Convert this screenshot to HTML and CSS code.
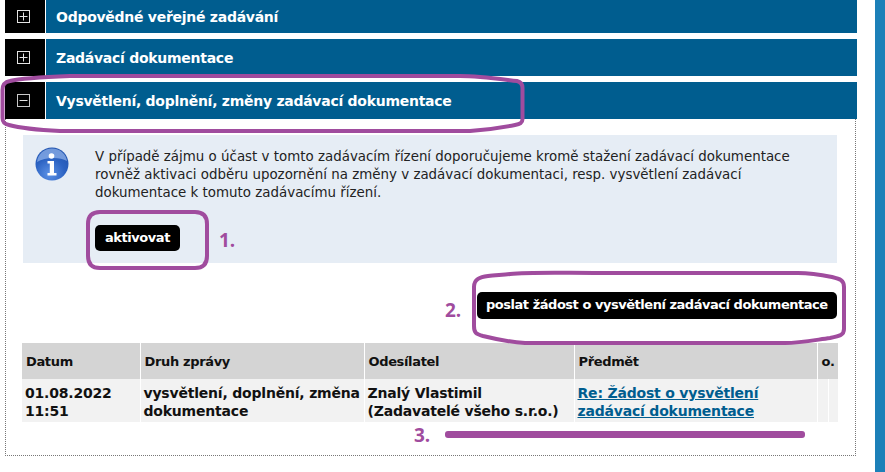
FILE: index.html
```html
<!DOCTYPE html>
<html lang="cs">
<head>
<meta charset="utf-8">
<title>Vysvětlení</title>
<link rel="stylesheet" href="styles.css">
</head>
<body>
<div class="page">
  <main class="content">
    <div class="bar bar-first"><span class="toggle"><svg width="13" height="13" viewBox="0 0 13 13"><rect x="0.5" y="0.5" width="12" height="12" fill="none" stroke="#e4e4e4"/><path d="M6.500 2.500v8M2.500 6.500h8" stroke="#e4e4e4"/></svg></span><h2 class="bar-title">Odpovědné veřejné zadávání</h2></div>
    <div class="bar"><span class="toggle"><svg width="13" height="13" viewBox="0 0 13 13"><rect x="0.5" y="0.5" width="12" height="12" fill="none" stroke="#e4e4e4"/><path d="M6.500 2.500v8M2.500 6.500h8" stroke="#e4e4e4"/></svg></span><h2 class="bar-title">Zadávací dokumentace</h2></div>
    <div class="bar"><span class="toggle"><svg width="13" height="13" viewBox="0 0 13 13"><rect x="0.5" y="0.5" width="12" height="12" fill="none" stroke="#c8c8c8"/><path d="M2.500 6.500h8" stroke="#e4e4e4"/></svg></span><h2 class="bar-title">Vysvětlení, doplnění, změny zadávací dokumentace</h2></div>
    <section class="panel">
      <div class="info">
        <svg class="info-icon" width="34" height="34" viewBox="0 0 34 34">
          <defs>
            <radialGradient id="g" cx="0.42" cy="0.8" r="0.85"><stop offset="0" stop-color="#5d92e6"/><stop offset="0.55" stop-color="#2b62c2"/><stop offset="1" stop-color="#2153ad"/></radialGradient>
          </defs>
          <circle cx="17" cy="17" r="16.500" fill="url(#g)"/>
          <path d="M2 15C3 7 9 1.500 17 1.500S31 7 32 14C25 10 10 10 2 15z" fill="#9dbdf0" opacity="0.65"/>
          <circle cx="16.500" cy="9" r="2.800" fill="#fff"/>
          <path d="M12.500 14h6.500v12h2.500v2.500h-9V26h2.300v-9.500h-2.300z" fill="#fff"/>
        </svg>
        <div class="info-body">
          <p class="info-text">V případě zájmu o účast v tomto zadávacím řízení doporučujeme kromě stažení zadávací dokumentace rovněž aktivaci odběru upozornění na změny v zadávací dokumentaci, resp. vysvětlení zadávací dokumentace k tomuto zadávacímu řízení.</p>
          <a class="btn" href="#">aktivovat</a>
        </div>
      </div>
      <div class="actions"><a class="btn btn-wide" href="#">poslat žádost o vysvětlení zadávací dokumentace</a></div>
      <table class="messages">
        <colgroup><col class="c1"><col class="c2"><col class="c3"><col class="c4"><col class="c5"><col class="c6"></colgroup>
        <thead>
          <tr><th>Datum</th><th>Druh zprávy</th><th>Odesílatel</th><th>Předmět</th><th colspan="2">o.</th></tr>
        </thead>
        <tbody>
          <tr><td>01.08.2022<br>11:51</td><td>vysvětlení, doplnění, změna dokumentace</td><td>Znalý Vlastimil<br>(Zadavatelé všeho s.r.o.)</td><td><a href="#">Re: Žádost o vysvětlení zadávací dokumentace</a></td><td></td><td></td></tr>
        </tbody>
      </table>
    </section>
  </main>
  <aside class="side"></aside>

  <svg class="marks" width="885" height="472" viewBox="0 0 885 472">
    <path d="M10 81C22 78 45 77 70 76H460C480 76 500 79 517 81C521 82 522.500 84 522.500 88V119C522.500 123 520 124 515 125C500 128 485 130 470 131H60C40 130 20 128 9 125C4 124 2.500 122 2.500 118V90C2.500 84 5 82 10 81z"/>
    <path d="M100 212H195C203 212 207 216 207 224V256C207 264 203 268 195 268H100C92 268 88 264 88 256V224C88 216 92 212 100 212z"/>
    <path d="M510 274C530 272 560 273 600 273H798C810 273 822 275 832 277C840 279 844 280 844 287V329C844 335 840 336 830 338C815 340 800 343 785 343H525C510 342 495 339 483 336C476 334 474 333 474 326V287C474 279 480 277 488 276C495 275 502 275 510 274z"/>
  </svg>
  <div class="ann-line"></div>
  <span class="ann-num n1">1.</span>
  <span class="ann-num n2">2.</span>
  <span class="ann-num n3">3.</span>
</div>
</body>
</html>
```
FILE: styles.css
```css
* { box-sizing: border-box; }
html, body { margin: 0; padding: 0; height: 100%; background: #fff; overflow: hidden; }
body { font-family: "DejaVu Sans", Verdana, sans-serif; color: #111; }

.page { position: relative; width: 885px; height: 472px; display: flex; overflow: hidden; }
.content { width: 852px; margin-left: 5px; flex: none; }
.side { width: 10px; margin-left: 18px; flex: none; background: #1c80b8; }

.bar { display: flex; height: 37px; margin-bottom: 6px; background: #005d8f; }
.bar-first { height: 33px; }
.toggle { width: 41px; flex: none; display: flex; align-items: center; justify-content: center; background: #000; border-right: 1px solid #fff; padding-right: 4px; }
.toggle svg { display: block; }
.bar-title { margin: 0 0 0 10px; align-self: center; font-size: 14px; font-weight: bold; color: #fff; letter-spacing: -0.27px; line-height: 16px; }

.panel { margin-top: -6px; width: 851px; height: 337px; border: 1px dotted #777; border-top: 0; padding: 16px 17px 0 17px; }
.info { display: flex; height: 128px; width: 814px; background: #e6edf5; padding: 12px 0 0 12px; }
.info-icon { flex: none; display: block; }
.info-body { margin-left: 26px; }
.info-text { margin: 1px 0 0; width: 702px; font-size: 13.4px; line-height: 18px; color: #222; }
.btn { display: inline-block; background: #000; color: #fff; text-decoration: none; font-size: 13px; font-weight: bold; border-radius: 5px; padding: 0 10px; height: 26px; line-height: 25px; letter-spacing: -0.45px; }
.info-body .btn { margin-top: 23px; }
.actions { display: flex; justify-content: flex-end; margin-top: 29px; width: 814px; }
.btn-wide { height: 27px; line-height: 26px; padding: 0 9px; width: 360px; white-space: nowrap; letter-spacing: -0.47px; }

.messages { margin: 24px 0 0 -1px; width: 816px; border-collapse: collapse; table-layout: fixed; font-size: 14px; }
.c1 { width: 118px; } .c2 { width: 224px; } .c3 { width: 210px; } .c4 { width: 243px; } .c5 { width: 11px; } .c6 { width: 10px; }
.messages th { height: 36px; background: #d4d4d4; text-align: left; font-size: 13px; font-weight: bold; padding: 0 4px; border-left: 1px solid #fff; letter-spacing: -0.35px; }
.messages th:first-child, .messages td:first-child { border-left: 0; }
.messages td { height: 43px; background: #f2f2f2; font-weight: bold; vertical-align: top; padding: 5px 3px 0; line-height: 18px; border-left: 1px solid #fff; letter-spacing: -0.2px; }
.messages a { color: #005d8f; }

.marks { position: absolute; left: 0; top: 0; pointer-events: none; }
.marks path { fill: none; stroke: #a04c9e; stroke-width: 4; }
.ann-line { position: absolute; left: 445px; top: 431px; width: 360px; height: 7px; background: #a04c9e; border-radius: 3px; }
.ann-num { position: absolute; font-family: "Open Sans", sans-serif; font-size: 19px; line-height: 24px; font-weight: bold; color: #a04c9e; }
.n1 { left: 219px; top: 228px; }
.n2 { left: 445px; top: 298px; }
.n3 { left: 414px; top: 423px; }
```
